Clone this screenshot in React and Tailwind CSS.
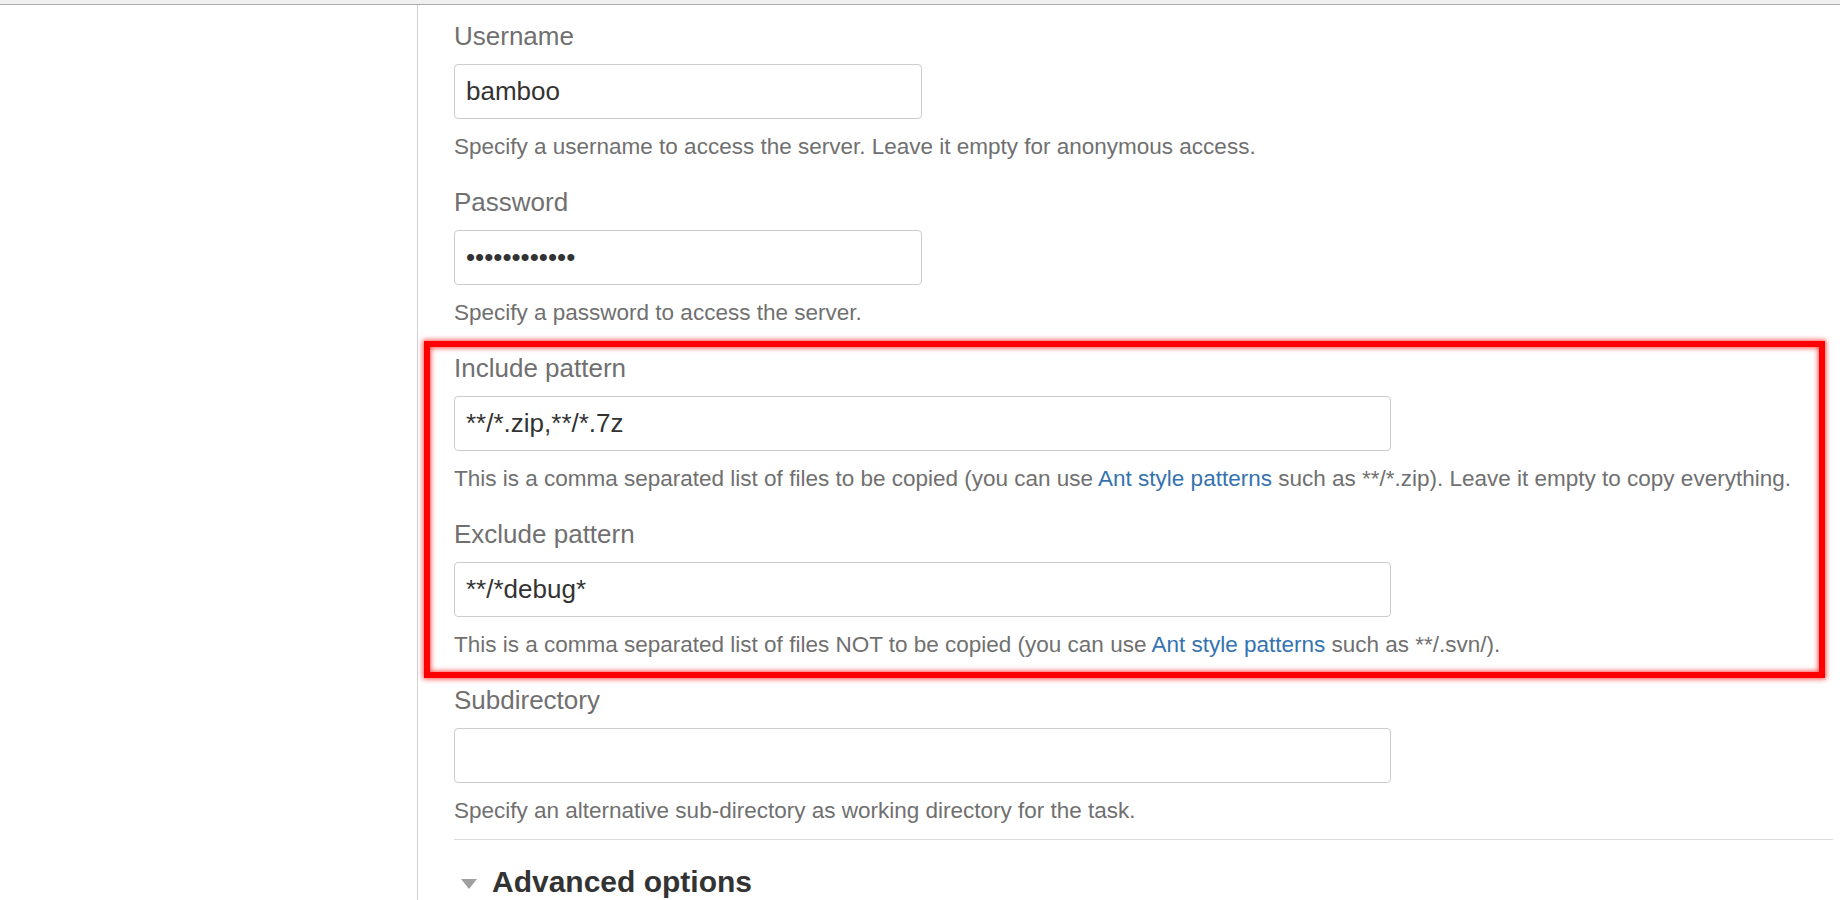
import { useState } from 'react';

function Field({ label, value = '', type = 'text', wide = false, children }) {
	const [val, setVal] = useState(value);
	return (
		<div className="mb-[27px]">
			<label className="block text-[26px] leading-[30px] text-[#707070]">
				{label}
			</label>
			<input
				type={type}
				value={val}
				onChange={(e) => setVal(e.target.value)}
				className={`mt-[13px] block h-[55px] ${wide ? 'w-[937px]' : 'w-[468px]'} rounded-[4px] border border-[#cccccc] bg-white px-[11px] text-[26px] text-[#333333] outline-none`}
			/>
			<p className="mt-[15px] text-[22.5px] leading-[26px] text-[#707070]">
				{children}
			</p>
		</div>
	);
}

function AntLink() {
	return (
		<a href="#" className="text-[#3572b0]">
			Ant style patterns
		</a>
	);
}

export default function App() {
	return (
		<div
			className="relative h-[900px] w-full overflow-hidden bg-white"
			style={{ fontFamily: '"Liberation Sans", Arial, sans-serif' }}
		>
			{/* top strip */}
			<div className="h-[5px] border-b border-[#a9a9a9] bg-[#f0f0f0]" />

			<div className="flex h-[895px]">
				{/* left sidebar (empty) */}
				<div className="w-[418px] shrink-0 border-r border-[#d0d0d0]" />

				{/* form */}
				<div className="flex-1 pl-[36px] pr-[7px] pt-[16px]">
					<Field label="Username" value="bamboo">
						Specify a username to access the server. Leave it empty for anonymous access.
					</Field>
					<Field label="Password" value="bamboosecret" type="password">
						Specify a password to access the server.
					</Field>
					<Field label="Include pattern" value="**/*.zip,**/*.7z" wide>
						This is a comma separated list of files to be copied (you can use <AntLink /> such as **/*.zip). Leave it empty to copy everything.
					</Field>
					<Field label="Exclude pattern" value="**/*debug*" wide>
						This is a comma separated list of files NOT to be copied (you can use <AntLink /> such as **/.svn/).
					</Field>
					<div>
						<label className="block text-[26px] leading-[30px] text-[#707070]">
							Subdirectory
						</label>
						<input
							type="text"
							defaultValue=""
							className="mt-[13px] block h-[55px] w-[937px] rounded-[4px] border border-[#cccccc] bg-white px-[11px] text-[26px] text-[#333333] outline-none"
						/>
						<p className="mt-[15px] text-[22.5px] leading-[26px] text-[#707070]">
							Specify an alternative sub-directory as working directory for the task.
						</p>
					</div>

					<div className="mt-[15px] border-t border-[#dddddd]" />

					<div className="mt-[25px] flex items-center">
						<svg width="16" height="10" viewBox="0 0 16 10" className="ml-[7px] mt-[4px]">
							<polygon points="0,0 16,0 8,10" fill="#a0a0a0" />
						</svg>
						<h3 className="ml-[15px] text-[30px] font-bold leading-[34px] text-[#333333]">
							Advanced options
						</h3>
					</div>
				</div>
			</div>

			{/* highlight annotation */}
			<div className="pointer-events-none absolute left-[424px] top-[341px] h-[337px] w-[1401px] border-[6px] border-[#ff0000] shadow-[0_0_5px_1px_rgba(255,0,0,0.7),inset_0_0_5px_1px_rgba(255,0,0,0.7)]" />
		</div>
	);
}
